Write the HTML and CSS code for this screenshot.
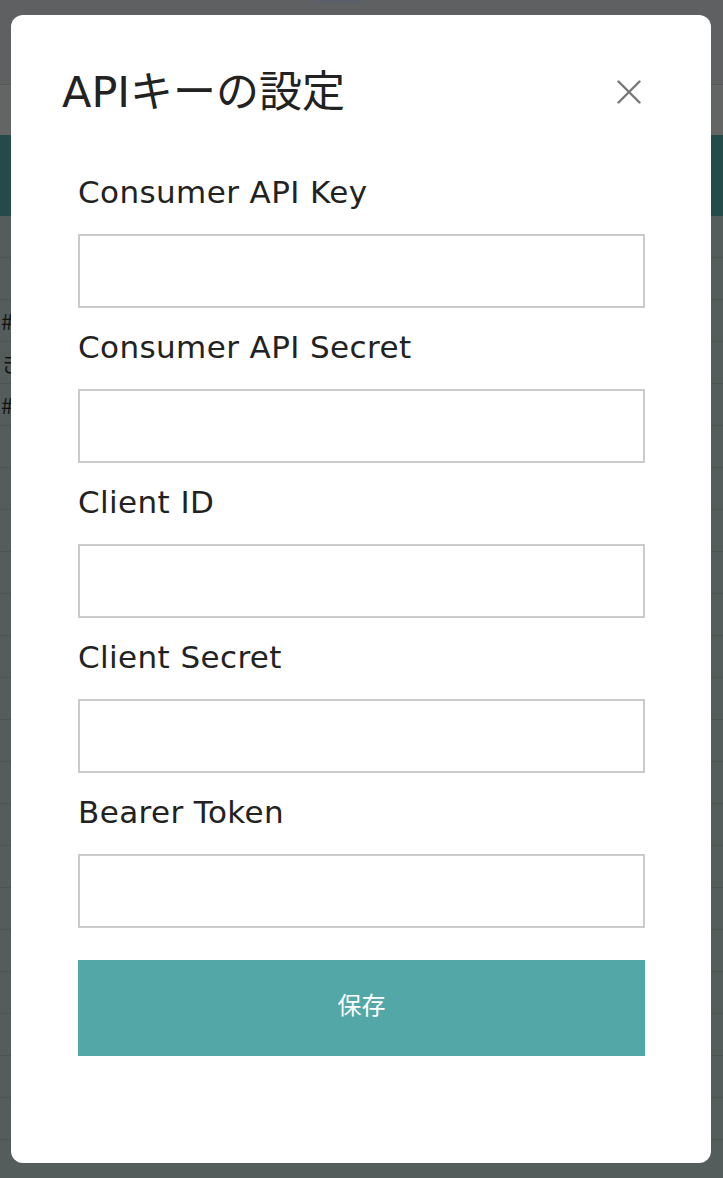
FILE: index.html
```html
<!DOCTYPE html>
<html lang="ja">
<head>
<meta charset="utf-8">
<title>APIキーの設定</title>
<link rel="stylesheet" href="styles.css">
</head>
<body>
<div class="page">
  <div class="topbar"><span class="tab"></span></div>
  <div class="subbar"></div>
  <div class="hero"></div>
  <div class="rows">
    <div class="row"></div>
    <div class="row"></div>
    <div class="row">#</div>
    <div class="row">き</div>
    <div class="row">#</div>
    <div class="row"></div>
    <div class="row"></div>
    <div class="row"></div>
    <div class="row"></div>
    <div class="row"></div>
    <div class="row"></div>
    <div class="row"></div>
    <div class="row"></div>
    <div class="row"></div>
    <div class="row"></div>
    <div class="row"></div>
    <div class="row"></div>
    <div class="row"></div>
    <div class="row"></div>
    <div class="row"></div>
    <div class="row"></div>
    <div class="row"></div>
    <div class="row"></div>
  </div>
</div>

<div class="modal">
  <div class="modal-header">
    <h1 class="modal-title">APIキーの設定</h1>
    <button class="close" aria-label="閉じる">
      <svg width="24" height="24" viewBox="0 0 24 24"><path d="M1.5 1.5 L22.5 22.5 M22.5 1.5 L1.5 22.5" stroke="#777" stroke-width="2.4" fill="none" stroke-linecap="round"/></svg>
    </button>
  </div>
  <form class="form">
    <label class="label">Consumer API Key</label>
    <input class="input" type="text">
    <label class="label">Consumer API Secret</label>
    <input class="input" type="text">
    <label class="label">Client ID</label>
    <input class="input" type="text">
    <label class="label">Client Secret</label>
    <input class="input" type="text">
    <label class="label">Bearer Token</label>
    <input class="input" type="text">
    <button class="save" type="button">保存</button>
  </form>
</div>
</body>
</html>
```
FILE: styles.css
```css
html, body {
  margin: 0;
  padding: 0;
}
body {
  width: 723px;
  height: 1178px;
  overflow: hidden;
  background: #545d5b;
  font-family: "DejaVu Sans", "Noto Sans CJK JP", sans-serif;
}
.page {
  display: flex;
  flex-direction: column;
}
.topbar {
  height: 84px;
  background: #5f6062;
  border-bottom: 1px solid #545557;
  display: flex;
  justify-content: center;
}
.tab {
  width: 50px;
  height: 3px;
  margin-left: -48px;
  background: #5a6069;
  border-radius: 0 0 4px 4px;
}
.subbar {
  height: 50px;
  background: #636464;
}
.hero {
  height: 81px;
  background: #244a4a;
}
.rows {
  display: flex;
  flex-direction: column;
}
.row {
  height: 41px;
  border-bottom: 1px solid #4d5553;
  color: #111;
  font-size: 22px;
  line-height: 41px;
  padding-left: 1px;
  font-family: "Noto Sans CJK JP", sans-serif;
}

.modal {
  position: fixed;
  left: 11px;
  top: 15px;
  width: 700px;
  height: 1148px;
  background: #ffffff;
  border-radius: 12px;
  box-sizing: border-box;
  padding: 52px 66px 0 67px;
  color: #222;
}
.modal-header {
  display: flex;
  align-items: center;
  justify-content: space-between;
  margin-left: -16px;
  margin-right: 4px;
  height: 50px;
}
.modal-title {
  margin: 0;
  font-weight: normal;
  font-size: 43px;
  line-height: 50px;
  color: #222;
  font-family: "DejaVu Sans", "Noto Sans CJK JP", sans-serif;
  letter-spacing: 0;
}
.close {
  border: none;
  background: none;
  padding: 0;
  width: 24px;
  height: 24px;
  display: flex;
}
.form {
  display: flex;
  flex-direction: column;
  margin-top: 36px;
}
.label {
  display: block;
  font-size: 31px;
  line-height: 44px;
  margin: 17px 0 20px 0;
  color: #222;
  letter-spacing: 0.4px;
}
.input {
  display: block;
  box-sizing: border-box;
  width: 567px;
  height: 74px;
  margin: 0;
  border: 2px solid #cbcbcb;
  border-radius: 0;
  background: #fff;
  padding: 0 12px;
  font-size: 24px;
}
.save {
  margin-top: 32px;
  width: 567px;
  height: 96px;
  border: none;
  border-radius: 0;
  background: #53a7a6;
  color: #fff;
  font-size: 24px;
  padding: 0 0 10px 0;
  font-family: "Noto Sans CJK JP", sans-serif;
}
```
